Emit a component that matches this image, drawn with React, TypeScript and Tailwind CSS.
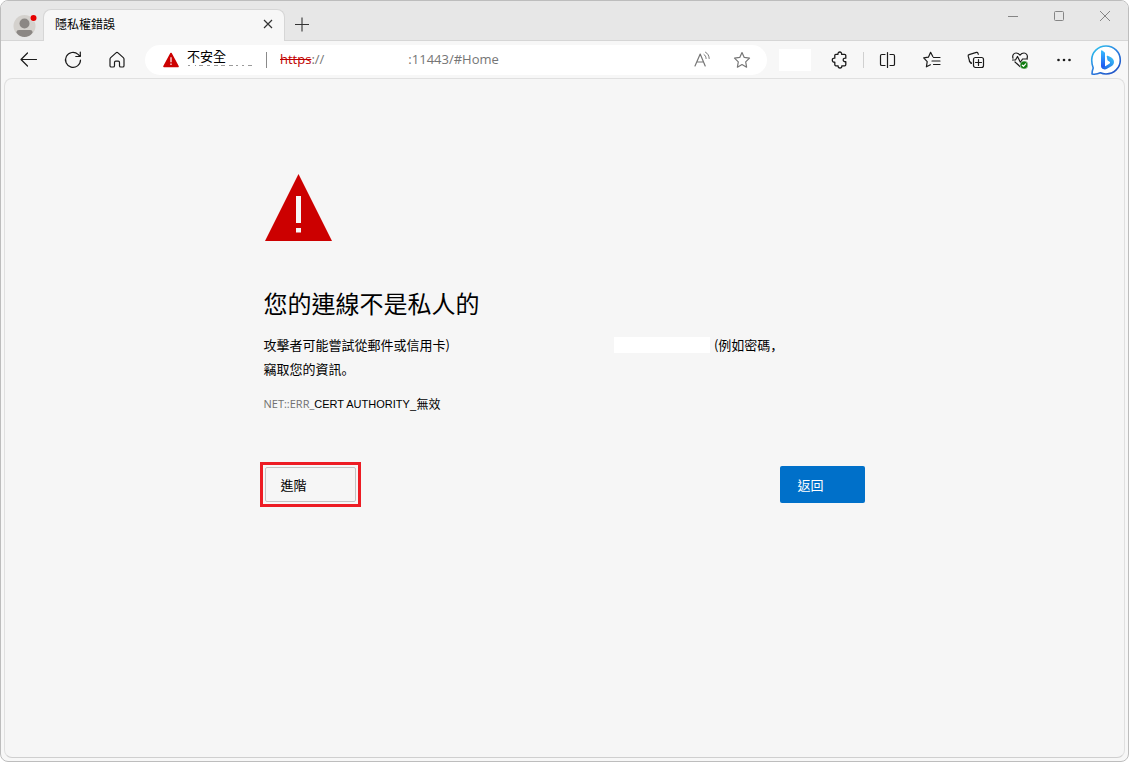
import type { ReactNode } from "react";

function Icon({ children }: { children: ReactNode }) {
  return (
    <svg
      className="size-5"
      viewBox="0 0 20 20"
      fill="none"
      stroke="currentColor"
      strokeWidth="1.2"
      strokeLinecap="round"
      strokeLinejoin="round"
      aria-hidden="true"
    >
      {children}
    </svg>
  );
}

function ToolButton({ label, children }: { label: string; children: ReactNode }) {
  return (
    <button type="button" aria-label={label} className="flex h-9 w-11 shrink-0 items-center justify-center text-[#1b1b1b]">
      {children}
    </button>
  );
}

function Avatar() {
  return (
    <svg className="size-6" viewBox="0 0 24 24" aria-hidden="true">
      <defs>
        <clipPath id="avatar-clip">
          <circle cx="11.500" cy="13" r="11" />
        </clipPath>
      </defs>
      <circle cx="11.500" cy="13" r="11" fill="#d4d1cd" />
      <circle cx="11.500" cy="10.500" r="5" fill="#8b8784" />
      <path d="M3.500 19.500c0-1.800 1-2.500 2.500-2.500h11c1.500 0 2.500.7 2.500 2.500-1.300 3-4.600 4.800-8 4.800s-6.700-1.800-8-4.800z" fill="#8b8784" clipPath="url(#avatar-clip)" />
      <circle cx="20.500" cy="5" r="3.500" fill="#e7e7e7" />
      <circle cx="20.500" cy="5" r="3" fill="#e60000" />
    </svg>
  );
}

function TitleBar() {
  return (
    <header className="flex h-10 border-b border-[#d6d6d6] bg-[#e7e7e7]">
      <button type="button" aria-label="設定檔" className="flex w-[42px] shrink-0 items-center justify-end pt-2 pr-1.5">
        <Avatar />
      </button>
      <div className="mt-2 -mb-px flex w-[242px] items-center justify-between rounded-t-lg border border-b-0 border-[#d6d6d6] bg-[#f7f7f7] pr-2 pb-1 pl-[11px]">
        <span className="text-xs text-black">隱私權錯誤</span>
        <button type="button" aria-label="關閉索引標籤" className="flex size-4 items-center justify-center text-[#333]">
          <svg className="size-4" viewBox="0 0 16 16" stroke="currentColor" strokeWidth="1.200" aria-hidden="true">
            <path d="M4 4l8 8M12 4l-8 8" />
          </svg>
        </button>
      </div>
      <button type="button" aria-label="新增索引標籤" className="flex w-[34px] items-center justify-center pt-2 text-[#333]">
        <svg className="size-4" viewBox="0 0 16 16" stroke="currentColor" strokeWidth="1.100" aria-hidden="true">
          <path d="M1 7.500h14M8 .5v14" />
        </svg>
      </button>
      <div className="ml-auto flex h-[30px] text-[#858585]">
        <button type="button" aria-label="最小化" className="flex w-[46px] items-center justify-center">
          <svg className="size-3" viewBox="0 0 12 12" stroke="currentColor" aria-hidden="true">
            <path d="M1 6.500h10" />
          </svg>
        </button>
        <button type="button" aria-label="最大化" className="flex w-[46px] items-center justify-center">
          <svg className="size-3" viewBox="0 0 12 12" fill="none" stroke="currentColor" aria-hidden="true">
            <rect x="1.500" y="1.500" width="9" height="9" rx="1" />
          </svg>
        </button>
        <button type="button" aria-label="關閉" className="flex w-[46px] items-center justify-center">
          <svg className="size-3" viewBox="0 0 12 12" stroke="currentColor" aria-hidden="true">
            <path d="M1 1l10 10M11 1L1 11" />
          </svg>
        </button>
      </div>
    </header>
  );
}

function AddressBar() {
  return (
    <div className="mr-3 ml-1.5 flex h-[30px] min-w-0 flex-1 items-center rounded-full bg-white pr-[15px] pl-[18px]">
      <svg className="size-4 shrink-0" viewBox="0 0 16 16" aria-hidden="true">
        <path d="M8 1.500L15 14.500H1z" fill="#c00" stroke="#c00" strokeWidth="1.600" strokeLinejoin="round" />
        <path d="M8 5.200v5M8 11.500v1.500" stroke="#f3c9c9" strokeWidth="1.500" />
      </svg>
      <div className="ml-2 flex w-20 shrink-0 items-center justify-between">
        <div className="flex flex-col pb-1">
          <span className="text-[13px] leading-[14px] text-black">不安全</span>
          <svg className="h-1 w-[67px]" viewBox="0 0 67 4" stroke="#9a9a9a" aria-hidden="true">
            <path d="M1 2.500h2M8 2.500h1M12 2.500h4M20 2.500h3M27 2.500h4M34 2.500h4M42 2.500h4M49 2.500h2M55 2.500h2M61 2.500h4" />
          </svg>
        </div>
        <span className="h-4 w-px bg-[#8a8a8a]" />
      </div>
      <div className="ml-[13px] flex min-w-0 flex-1 items-center pt-px font-['Open_Sans','Noto_Sans_CJK_TC',sans-serif] text-[13px] text-[#757575]">
        <span>
          <span className="text-[#c00000] line-through">https</span>://
        </span>
        <input
          type="text"
          aria-label="網址"
          defaultValue=":11443/#Home"
          className="ml-[84px] w-24 min-w-0 flex-1 bg-transparent outline-none"
        />
      </div>
      <div className="flex shrink-0 gap-5 text-[#767676]">
        <button type="button" aria-label="大聲朗讀" className="flex size-5 items-center justify-center">
          <Icon>
            <path d="M3 16L8.200 4l5 12M4.800 12h6.800" />
            <path d="M12 4.500c1.300.9 2 2.200 2.100 4M13.500 2.200c2.300 1.300 3.600 3.500 3.700 6.300" strokeWidth="1" />
          </Icon>
        </button>
        <button type="button" aria-label="加入我的最愛" className="flex size-5 items-center justify-center">
          <Icon>
            <path d="M10 2.600l2.250 4.850 5.250.7-3.800 3.700.9 5.300L10 14.600l-4.600 2.550.9-5.300-3.800-3.700 5.250-.7z" />
          </Icon>
        </button>
      </div>
    </div>
  );
}

function BingLogo() {
  return (
    <svg className="size-8" viewBox="0 0 32 32" fill="none" aria-hidden="true">
      <defs>
        <linearGradient id="bubble-line" x1="4" y1="2" x2="26" y2="30" gradientUnits="userSpaceOnUse">
          <stop stopColor="#2fc6ee" />
          <stop offset=".5" stopColor="#2b7fe0" />
          <stop offset="1" stopColor="#1f4fc4" />
        </linearGradient>
        <linearGradient id="bing-stem" x1="11" y1="7" x2="14" y2="25" gradientUnits="userSpaceOnUse">
          <stop stopColor="#37bdff" />
          <stop offset="1" stopColor="#1b48ef" />
        </linearGradient>
        <linearGradient id="bing-bowl" x1="22" y1="14" x2="12" y2="25" gradientUnits="userSpaceOnUse">
          <stop stopColor="#39b9f5" />
          <stop offset="1" stopColor="#1c5fe6" />
        </linearGradient>
      </defs>
      <path
        d="M16 2c8 0 14.300 6.200 14.300 14S24 30 16 30c-2 0-4-.4-5.600-1.200-2.500 1.200-5.400 1.700-8.400 1.200 0-2 .4-4 1.200-6C2.200 21.500 1.700 19 1.700 16 1.700 8.200 8 2 16 2z"
        fill="#fff"
        stroke="url(#bubble-line)"
        strokeWidth="1.600"
        strokeLinejoin="round"
      />
      <path d="M11 7.200c0-.8.600-1.100 1.200-.7l2 1.400c.5.300.8.800.8 1.500v12.800l1 .8-3.200 1.600c-1.100-.5-1.800-1.500-1.800-2.800z" fill="url(#bing-stem)" />
      <path d="M16.800 12.700c-.3-.7.200-1.200.9-1l2.800 1.300c2.300 1.100 3.500 3 3.500 5.100 0 1.700-.8 3.100-2.200 4l-4.800 2.700c-2.200 1.200-4.600.5-5.700-1.600 1.500.3 2.700 0 3.700-.6l4.600-3.100c.8-.6.600-1.600-.3-2l-.9-.5c-.6-.3-.9-.7-1.100-1.500z" fill="url(#bing-bowl)" />
    </svg>
  );
}

function Toolbar() {
  return (
    <nav aria-label="瀏覽器工具列" className="flex h-[37px] items-center bg-[#f7f7f7] pr-1.5 pl-1.5">
      <ToolButton label="上一頁">
        <Icon>
          <path d="M17.500 9.500H2M8.500 3L2 9.500 8.500 16" />
        </Icon>
      </ToolButton>
      <ToolButton label="重新整理">
        <Icon>
          <path d="M17.500 10a7.500 7.500 0 1 1-2.400-5.600l1.900 2M17.300 2v4.500h-4.500" />
        </Icon>
      </ToolButton>
      <ToolButton label="首頁">
        <Icon>
          <path d="M9 2.900a1.500 1.500 0 0 1 2 0l5.300 4.700c.4.400.7.900.7 1.500v6.600c0 .8-.6 1.300-1.300 1.300h-1.900c-.8 0-1.300-.6-1.300-1.300v-3.200c0-.8-.5-1.300-1.300-1.300H8.800c-.8 0-1.300.5-1.300 1.300v3.200c0 .7-.5 1.300-1.300 1.300H4.300c-.7 0-1.300-.5-1.300-1.300V9.100c0-.6.3-1.100.7-1.500z" />
        </Icon>
      </ToolButton>
      <AddressBar />
      <span className="mr-1.5 h-[22px] w-8 shrink-0 bg-white" />
      <ToolButton label="擴充功能">
        <Icon>
          <path d="M5.200 5.300c0-.6.500-1 1-1h2.200c-.2-1.500.6-2.300 1.800-2.300s2 .8 1.800 2.300h3c.7 0 1.200.5 1.200 1.200v2.700c-1.800-.2-2.600.6-2.600 1.700s.8 2 2.600 1.800v2.900c0 .7-.5 1.200-1.200 1.200h-2.800c.2 1.500-.6 2.200-1.800 2.200s-2-.7-1.900-2.200H6.300c-.6 0-1.100-.5-1.100-1.200v-2.500C3.500 12.300 2.700 11.500 2.700 10s.8-2.100 2.500-1.900z" transform="translate(.6 0)" strokeWidth="1.300" />
        </Icon>
      </ToolButton>
      <span className="mx-0.5 h-4 w-px shrink-0 bg-[#d0d0d0]" />
      <ToolButton label="分割畫面">
        <Icon>
          <path d="M9.500 2.500v15M7 4.500H3.800c-.8 0-1.300.5-1.300 1.300v8.400c0 .8.500 1.300 1.300 1.300H7M12 4.500h3.200c.8 0 1.300.5 1.300 1.300v8.400c0 .8-.5 1.300-1.300 1.300H12" />
        </Icon>
      </ToolButton>
      <ToolButton label="我的最愛">
        <Icon>
          <path d="M10.800 6.500L8.600 2.300 6.400 7.200l-4.700.7L5.200 11.600l-.8 5.200 4-2M11.500 7.500h6.500M10 11h8M11.500 14.500h6.500" />
        </Icon>
      </ToolButton>
      <ToolButton label="集錦">
        <Icon>
          <path d="M5.200 12.500l-1-.4c-.7-.3-1-.9-.8-1.600L2.200 6.200c-.2-.8.200-1.400.9-1.600l7.300-2.200c.8-.2 1.400.2 1.600.9l.3 1" />
          <path d="M5.500 13.500c-.7-.1-1.200-.6-1.200-1.300" />
          <rect x="7.500" y="7.500" width="10" height="10" rx="2" />
          <path d="M12.500 9.500v6M9.500 12.500h6" />
        </Icon>
      </ToolButton>
      <ToolButton label="瀏覽器基本功能">
        <Icon>
          <path d="M3 8.200C2 5.200 3.800 3 6 3c1.700 0 3 .9 4 2.200C11 3.900 12.300 3 14 3c2.200 0 4.100 2.200 3.100 5.200M5 12l5 4.500M2.500 10h3l2-3.500 3 6L12.500 9H17.500" />
          <circle cx="14" cy="15" r="4" fill="#107c10" stroke="#f7f7f7" strokeWidth=".5" />
          <path d="M12.300 15.200l1.200 1.100 2.200-2.400" stroke="#fff" />
        </Icon>
      </ToolButton>
      <ToolButton label="設定及其他">
        <Icon>
          <g fill="currentColor" stroke="none">
            <circle cx="4.500" cy="10" r="1.300" />
            <circle cx="10" cy="10" r="1.300" />
            <circle cx="15.500" cy="10" r="1.300" />
          </g>
        </Icon>
      </ToolButton>
      <button type="button" aria-label="Bing" className="ml-1 flex size-8 shrink-0 items-center justify-center">
        <BingLogo />
      </button>
    </nav>
  );
}

function ErrorPage() {
  return (
    <main className="mx-[3px] mb-[3px] flex-1 rounded-lg border border-[#e0e0e0] border-b-[#cfcfcf] bg-[#f6f6f6] px-6">
      <div className="mx-auto max-w-[602px] pt-[95px] pr-px text-black">
        <svg className="h-[68px] w-[68px]" viewBox="0 0 68 68" aria-hidden="true">
          <path d="M34.500 0L68 67H1z" fill="#c00" />
          <path d="M32 22h5v27h-5zM32 54h5v4.500h-5z" fill="#f6f6f6" />
        </svg>
        <h1 className="mt-[43px] text-2xl leading-9">您的連線不是私人的</h1>
        <div className="mt-3 font-['Noto_Sans_CJK_SC',sans-serif] text-[13px] leading-6">
          <p className="flex flex-wrap items-center">
            <span>攻擊者可能嘗試從郵件或信用卡)</span>
            <span className="mr-1 ml-[164px] h-4 w-24 bg-white" />
            <span>(例如密碼，</span>
          </p>
          <p>竊取您的資訊。</p>
        </div>
        <p className="mt-[13px] flex text-[11px] leading-5">
          <span className="font-['Open_Sans',sans-serif] text-[#707070]">NET::ERR_</span>
          <span className="font-['Liberation_Sans',sans-serif]">CERT AUTHORITY</span>
          <span className="text-xs leading-5">_無效</span>
        </p>
        <div className="-ml-1 mt-12 flex items-center justify-between">
          <div className="border-3 border-[#ed1c24] p-0.5">
            <button type="button" className="flex h-[35px] w-[91px] items-center rounded-xs border border-[#c4c4c4] pl-[15px] text-[13px]">
              進階
            </button>
          </div>
          <button type="button" className="flex h-[37px] w-[85px] items-center rounded-xs bg-[#0070c9] pl-[18px] text-[13px] text-white">
            返回
          </button>
        </div>
      </div>
    </main>
  );
}

export default function App() {
  return (
    <div className="flex min-h-screen flex-col overflow-hidden rounded-lg border border-[#bdbdbd] bg-[#f7f7f7] font-['Noto_Sans_CJK_TC',sans-serif]">
      <TitleBar />
      <Toolbar />
      <ErrorPage />
    </div>
  );
}
